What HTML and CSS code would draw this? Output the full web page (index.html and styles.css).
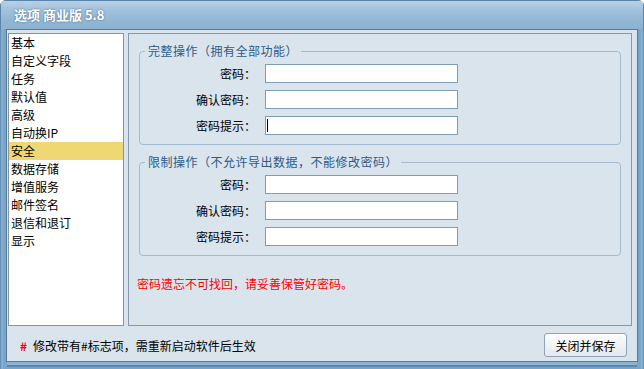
FILE: index.html
```html
<!DOCTYPE html>
<html lang="zh-CN">
<head>
<meta charset="utf-8">
<title>选项 商业版 5.8</title>
<link rel="stylesheet" href="styles.css">
</head>
<body>
<div class="window">
  <div class="titlebar">选项 商业版 5.8</div>
  <div class="frame">
    <div class="client">
      <div class="main">
        <ul class="nav">
          <li>基本</li>
          <li>自定义字段</li>
          <li>任务</li>
          <li>默认值</li>
          <li>高级</li>
          <li>自动换IP</li>
          <li class="active">安全</li>
          <li>数据存储</li>
          <li>增值服务</li>
          <li>邮件签名</li>
          <li>退信和退订</li>
          <li>显示</li>
        </ul>
        <div class="panel">
          <fieldset class="group">
            <legend>完整操作（拥有全部功能）</legend>
            <div class="row"><label class="lbl">密码：</label><input class="field" type="text"></div>
            <div class="row"><label class="lbl">确认密码：</label><input class="field" type="text"></div>
            <div class="row"><label class="lbl">密码提示：</label><span class="field caret-field"><span class="caret"></span></span></div>
          </fieldset>
          <fieldset class="group group-second">
            <legend>限制操作（不允许导出数据，不能修改密码）</legend>
            <div class="row"><label class="lbl">密码：</label><input class="field" type="text"></div>
            <div class="row"><label class="lbl">确认密码：</label><input class="field" type="text"></div>
            <div class="row"><label class="lbl">密码提示：</label><input class="field" type="text"></div>
          </fieldset>
          <p class="warning">密码遗忘不可找回，请妥善保管好密码。</p>
        </div>
      </div>
      <div class="footer">
        <span class="mark">#</span>
        <span class="note">修改带有#标志项，需重新启动软件后生效</span>
        <button class="btn" type="button">关闭并保存</button>
      </div>
    </div>
  </div>
</div>
</body>
</html>
```
FILE: styles.css
```css
html, body {
  margin: 0;
  padding: 0;
  background: #ffffff;
}

body {
  font-family: "Noto Sans CJK SC", "Liberation Sans", sans-serif;
  font-size: 12px;
  color: #000;
}

.window {
  width: 644px;
  height: 369px;
  display: flex;
  flex-direction: column;
  border-radius: 6px 6px 0 0;
  overflow: hidden;
  background: #6e9bc3;
}

.titlebar {
  height: 29px;
  flex: none;
  box-sizing: border-box;
  padding-left: 13px;
  line-height: 28px;
  color: #ffffff;
  font-weight: bold;
  font-size: 13px;
  text-shadow: 0 0 2px rgba(20, 60, 100, 0.7);
  background: linear-gradient(to bottom, #b8d0e5 0%, #a2c0db 35%, #92b6d3 70%, #8db3d1 100%);
  border-top: 1px solid #5a86ae;
  border-left: 1px solid #5a86ae;
  border-right: 1px solid #5a86ae;
}

.frame {
  flex: 1;
  display: flex;
  padding: 0 6px 7px 6px;
  background: linear-gradient(to right, #5b87ae 0, #8db3d3 2px, #7aa5c9 4px, #7aa5c9 calc(100% - 4px), #8db3d3 calc(100% - 2px), #5b87ae 100%);
}

.client {
  flex: 1;
  display: flex;
  flex-direction: column;
  background: #dae4ed;
  border: 1px solid #4f7ba3;
  padding: 3px 5px 0 1px;
  box-shadow: 0 4px 0 -1px #8db3d3, 0 6px 0 -1px #5b87ae;
}

.main {
  height: 293px;
  flex: none;
  display: flex;
  gap: 4px;
}

.nav {
  width: 116px;
  box-sizing: border-box;
  margin: 0;
  padding: 0;
  list-style: none;
  background: #ffffff;
  border: 1px solid #7f97ad;
}

.nav li {
  height: 18px;
  line-height: 18px;
  padding-left: 2px;
  white-space: nowrap;
}

.nav li.active {
  background: #efd774;
}

.panel {
  width: 504px;
  box-sizing: border-box;
  border: 1px solid #8299ae;
  padding: 9px 10px 0 10px;
}

.group {
  margin: 0;
  padding: 0 0 9px 0;
  border: 1px solid #a3bbd0;
  border-radius: 4px;
  min-width: 0;
}

.group legend {
  margin-left: 5px;
  padding: 0 3px;
  line-height: 16px;
  height: 16px;
  color: #2e5a86;
  letter-spacing: 0.5px;
}

.group-second {
  margin-top: 9px;
}

.row {
  display: flex;
  align-items: center;
  margin-top: 7px;
}

.row:first-of-type {
  margin-top: 5px;
}

.lbl {
  width: 116px;
  text-align: right;
  flex: none;
}

.field {
  box-sizing: border-box;
  width: 193px;
  height: 19px;
  margin: 0 0 0 9px;
  padding: 0 2px;
  border: 1px solid #7f9db9;
  background: #ffffff;
  font: inherit;
  outline: none;
}

.caret-field {
  display: flex;
  align-items: center;
  padding-left: 1px;
}

.caret {
  width: 1px;
  height: 13px;
  background: #000;
}

.warning {
  margin: 21px 0 0 -2px;
  line-height: 14px;
  color: #ff0000;
}

.footer {
  height: 35px;
  flex: none;
  box-sizing: border-box;
  display: flex;
  align-items: center;
  padding: 7px 5px 4px 12px;
}

.mark {
  color: #ff0000;
  font-weight: bold;
  width: 13px;
  flex: none;
}

.note {
  flex: 1;
}

.btn {
  width: 83px;
  height: 24px;
  box-sizing: border-box;
  border: 1px solid #8fa4b8;
  border-radius: 3px;
  background: linear-gradient(to bottom, #fbfcfd 0%, #f1f3f5 50%, #e4e8ec 100%);
  font: inherit;
  color: #000;
  padding: 0;
}
```
